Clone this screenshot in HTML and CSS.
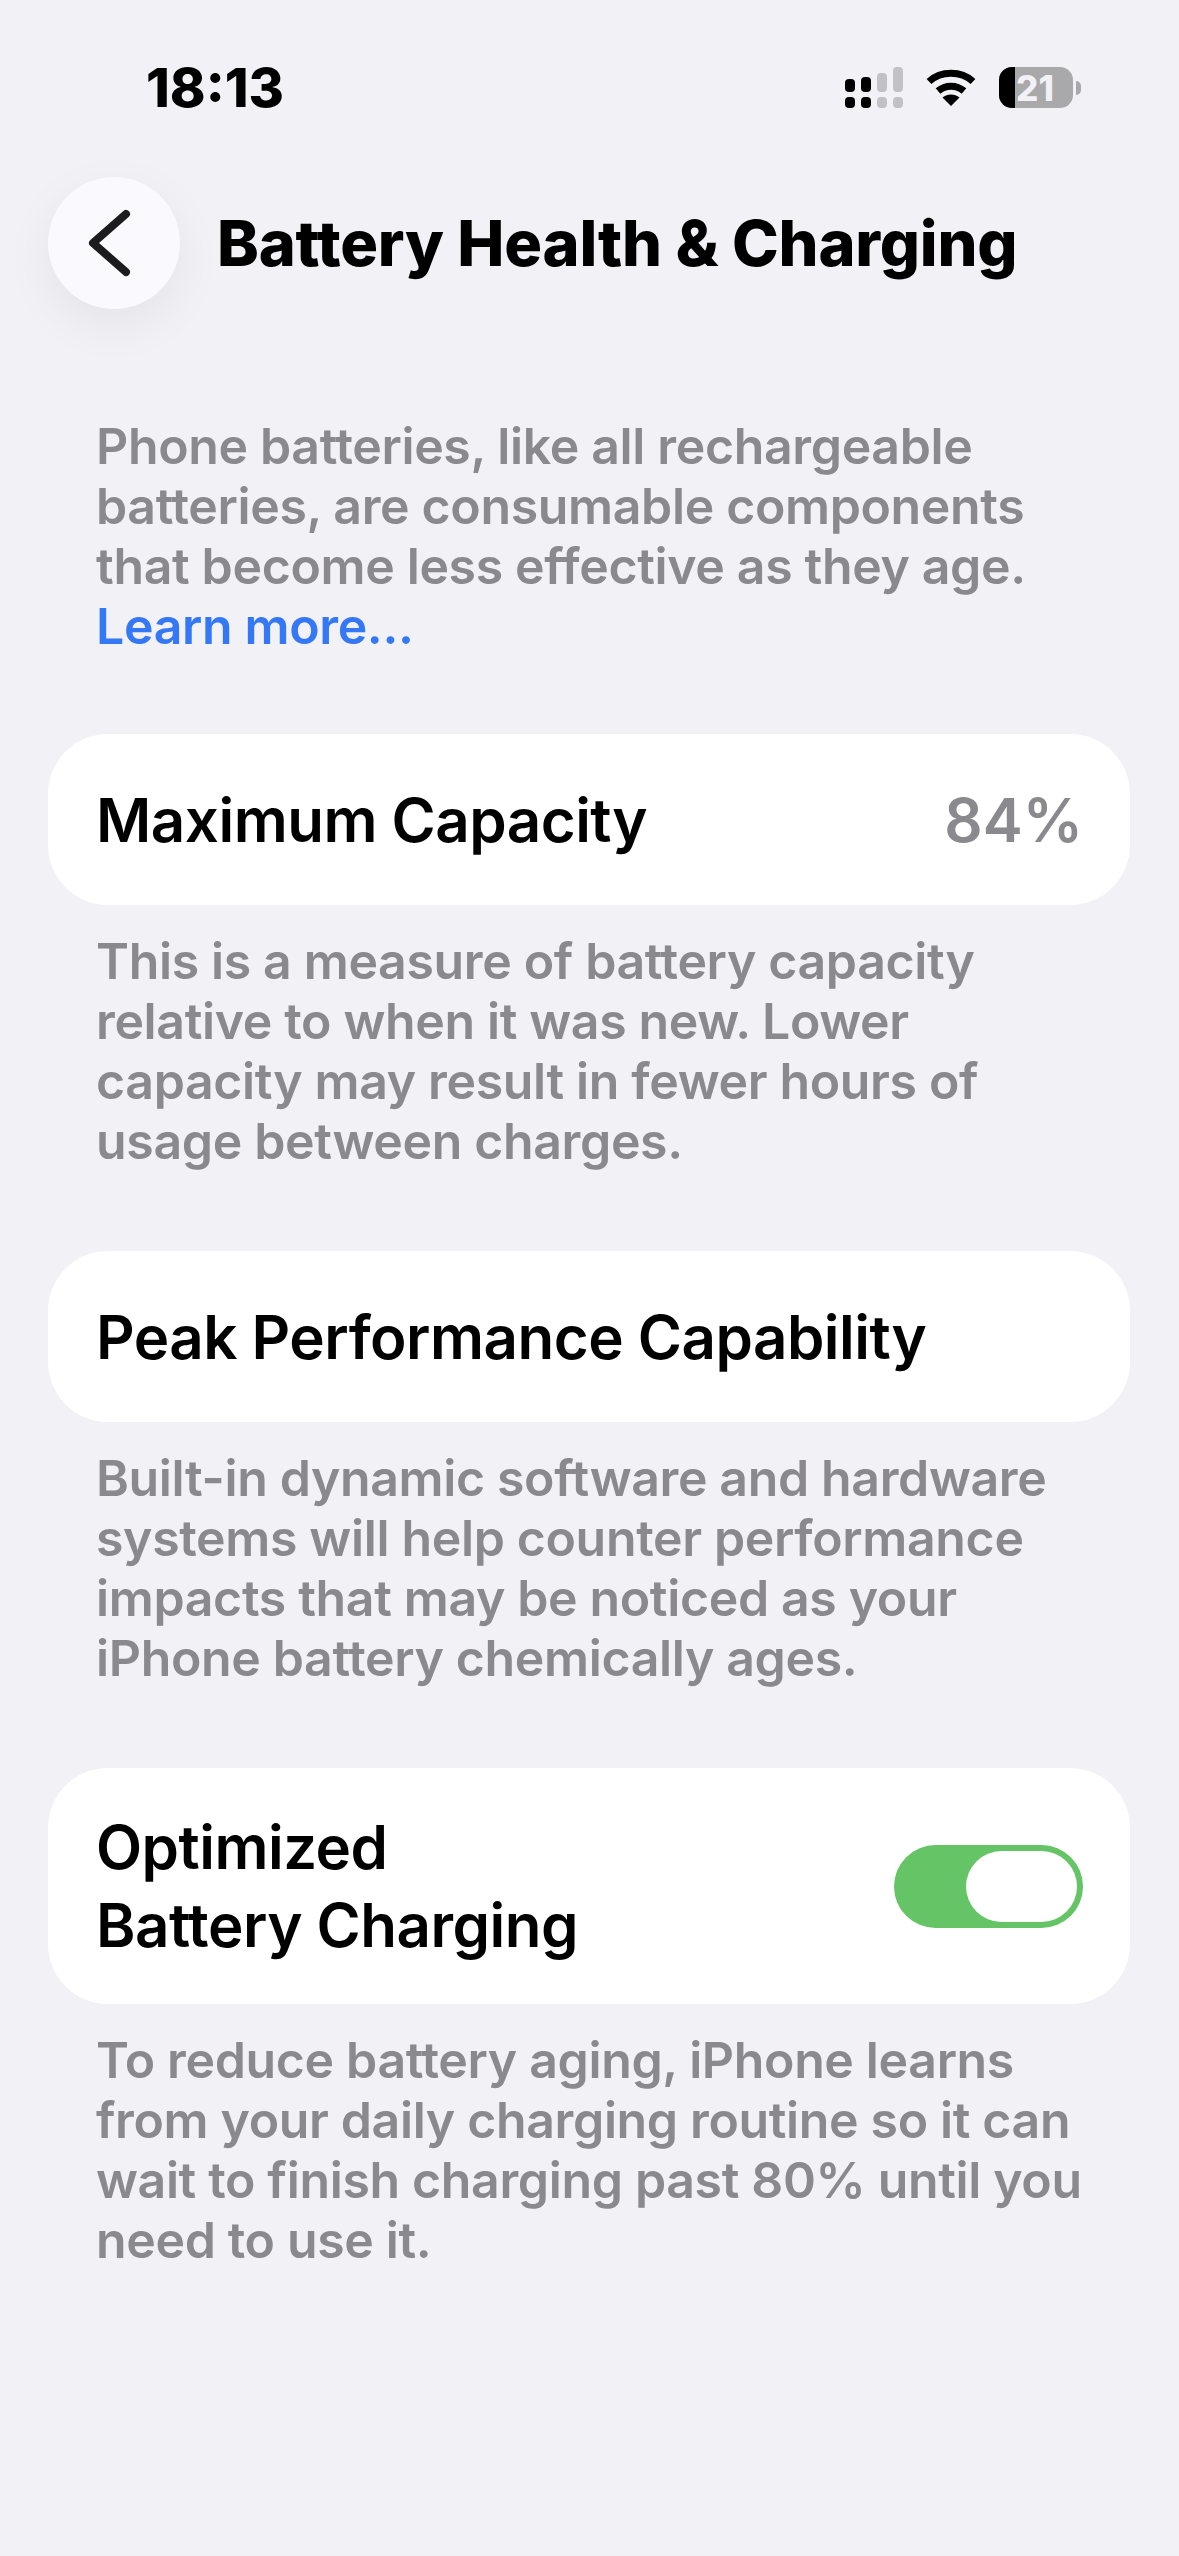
FILE: index.html
```html
<!DOCTYPE html>
<html lang="en">
<head>
    <meta charset="UTF-8">
    <meta name="viewport" content="width=device-width, initial-scale=1.0">
    <title>Battery Health &amp; Charging</title>
    <link rel="stylesheet" href="styles.css">
</head>
<body>
    <div class="status-bar">
        <span class="time">18:13</span>
        <div class="status-icons">
            <svg class="signal" width="58" height="41" viewBox="0 0 58 41">
                <rect x="0" y="12" width="10" height="13" rx="4" fill="#000"/>
                <rect x="16" y="10" width="10" height="15" rx="4" fill="#000"/>
                <rect x="32" y="6" width="10" height="19" rx="4" fill="#c2c2c6"/>
                <rect x="48" y="0" width="10" height="25" rx="4" fill="#c2c2c6"/>
                <rect x="0" y="30" width="10" height="11" rx="4" fill="#000"/>
                <rect x="16" y="30" width="10" height="11" rx="4" fill="#000"/>
                <rect x="32" y="30" width="10" height="11" rx="4" fill="#c2c2c6"/>
                <rect x="48" y="30" width="10" height="11" rx="4" fill="#c2c2c6"/>
            </svg>
            <svg class="wifi" width="50" height="37" viewBox="0 0 50 37">
                <path d="M3 12.5C15 1.5 35 1.5 47 12.5" fill="none" stroke="#000" stroke-width="7"/>
                <path d="M12 22C19.500 15.500 30.500 15.500 38 22" fill="none" stroke="#000" stroke-width="7"/>
                <path d="M25 37L16.500 28.500C21.500 24.500 28.500 24.500 33.500 28.500Z" fill="#000"/>
            </svg>
            <div class="battery">
                <div class="battery-body">
                    <div class="battery-used"></div>
                    <span class="battery-level">21</span>
                </div>
                <div class="battery-nub"></div>
            </div>
        </div>
    </div>

    <div class="nav">
        <button class="back">
            <svg width="44" height="70" viewBox="0 0 44 70">
                <path d="M38 6L5 35L38 64" fill="none" stroke="#1c1c1e" stroke-width="8" stroke-linecap="round" stroke-linejoin="round"/>
            </svg>
        </button>
        <h1>Battery Health &amp; Charging</h1>
    </div>

    <div class="content">
        <p class="note intro">Phone batteries, like all rechargeable<br>batteries, are consumable components<br>that become less effective as they age.<br><a href="#">Learn more...</a></p>

        <div class="card">
            <span class="card-title">Maximum Capacity</span>
            <span class="card-value">84%</span>
        </div>
        <p class="note">This is a measure of battery capacity<br>relative to when it was new. Lower<br>capacity may result in fewer hours of<br>usage between charges.</p>

        <div class="card">
            <span class="card-title">Peak Performance Capability</span>
        </div>
        <p class="note">Built-in dynamic software and hardware<br>systems will help counter performance<br>impacts that may be noticed as your<br>iPhone battery chemically ages.</p>

        <div class="card card-tall">
            <span class="card-title">Optimized<br>Battery Charging</span>
            <div class="toggle"><div class="knob"></div></div>
        </div>
        <p class="note">To reduce battery aging, iPhone learns<br>from your daily charging routine so it can<br>wait to finish charging past 80% until you<br>need to use it.</p>
    </div>
</body>
</html>
```

FILE: styles.css
```css
body {
    margin: 0;
    height: 2556px;
    background-color: #f1f1f6;
    font-family: Inter, "Liberation Sans", sans-serif;
    color: #000;
}
.status-bar {
    display: flex;
    justify-content: space-between;
    align-items: center;
    height: 41px;
    padding: 67px 98px 0 146px;
}
.time {
    font-size: 54px;
    font-weight: 800;
}
.status-icons {
    display: flex;
    align-items: center;
    gap: 23px;
}
.battery {
    display: flex;
    align-items: center;
    gap: 3px;
}
.battery-body {
    position: relative;
    width: 74px;
    height: 41px;
    border-radius: 13px;
    background-color: #a9a9ab;
    overflow: hidden;
    display: flex;
    justify-content: center;
    align-items: center;
}
.battery-used {
    position: absolute;
    left: 0;
    top: 0;
    bottom: 0;
    width: 16px;
    background-color: #000;
}
.battery-level {
    position: relative;
    margin-left: -2px;
    font-size: 35px;
    font-weight: 800;
    color: #f1f1f6;
}
.battery-nub {
    width: 5px;
    height: 14px;
    background-color: #a9a9ab;
    border-radius: 0 7px 7px 0;
}
.nav {
    display: flex;
    align-items: center;
    gap: 37px;
    margin-top: 69px;
    padding-left: 48px;
}
.back {
    display: flex;
    justify-content: center;
    align-items: center;
    width: 132px;
    height: 132px;
    padding: 0 8px 0 0;
    border: none;
    border-radius: 50%;
    background-color: #fafafe;
    box-shadow: 0 16px 50px rgba(0, 0, 0, 0.06);
}
h1 {
    margin: 0;
    font-size: 63px;
    font-weight: 800;
    letter-spacing: -0.2px;
}
.content {
    margin-top: 107px;
    padding: 0 49px 0 48px;
}
.note {
    margin: 0 0 80px;
    padding-left: 48px;
    font-size: 50px;
    font-weight: 600;
    letter-spacing: -0.35px;
    line-height: 60px;
    color: #8a8a8e;
}
.note a {
    color: #3478f6;
    text-decoration: none;
}
.intro {
    margin-bottom: 78px;
}
.card {
    display: flex;
    justify-content: space-between;
    align-items: center;
    height: 171px;
    margin-bottom: 26px;
    padding: 0 47px 0 48px;
    border-radius: 60px;
    background-color: #fff;
}
.card-tall {
    height: 236px;
}
.card-title {
    font-size: 60px;
    font-weight: 600;
    letter-spacing: -0.5px;
    line-height: 78px;
}
.card-value {
    font-size: 60px;
    font-weight: 600;
    color: #8a8a8e;
}
.toggle {
    display: flex;
    justify-content: flex-end;
    align-items: center;
    width: 183px;
    height: 83px;
    padding-right: 6px;
    border-radius: 42px;
    background-color: #65c466;
}
.knob {
    width: 111px;
    height: 71px;
    border-radius: 36px;
    background-color: #fff;
}
```
